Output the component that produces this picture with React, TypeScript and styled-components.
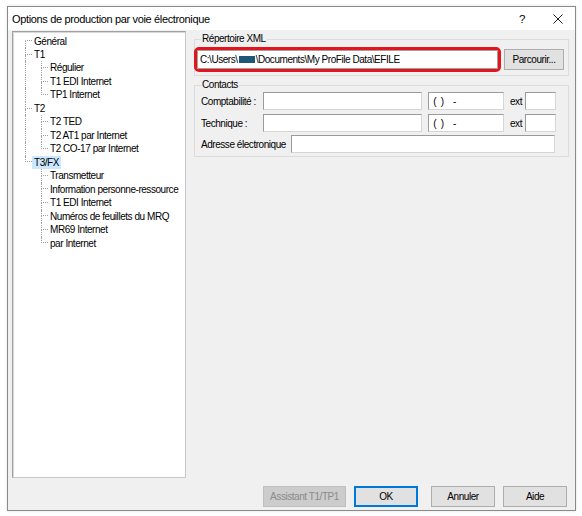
import React from 'react';
import styled, { createGlobalStyle } from 'styled-components';

const uiFont = `"Liberation Sans", Arial, sans-serif`;

const GlobalStyle = createGlobalStyle`
  html, body {
    margin: 0;
    padding: 0;
    background: #ffffff;
  }
  body {
    font-family: ${uiFont};
    font-size: 10px;
    letter-spacing: -0.45px;
    color: #000;
  }
`;

const Page = styled.div`
  width: 582px;
  height: 516px;
  padding: 6px 0 0 7px;
  box-sizing: border-box;
  overflow: hidden;
`;

const Window = styled.div`
  width: 569px;
  height: 505px;
  box-sizing: border-box;
  border: 1px solid #8a8a8a;
  background: #f0f0f0;
  display: flex;
  flex-direction: column;
  box-shadow: 0 0 3px rgba(0, 0, 0, 0.12);
`;

const TitleBar = styled.div`
  height: 24px;
  background: #ffffff;
  display: flex;
  align-items: center;
  padding-left: 4px;
`;

const Title = styled.div`
  flex: 1;
  font-size: 11px;
  letter-spacing: -0.35px;
`;

const HelpGlyph = styled.div`
  width: 14px;
  font-size: 11.5px;
  margin-right: 24px;
  text-align: center;
`;

const CloseButton = styled.div`
  width: 10px;
  height: 10px;
  margin-right: 12px;
  display: flex;
`;

const Body = styled.div`
  flex: 1;
  display: flex;
  flex-direction: column;
  padding: 1px 6px 3px 4px;
`;

const Main = styled.div`
  display: flex;
  gap: 8px;
`;

const TreeBox = styled.div`
  width: 174px;
  height: 447px;
  box-sizing: border-box;
  background: #ffffff;
  border: 1px solid #a0a0a0;
  border-right-color: #c8c8c8;
  border-bottom-color: #c8c8c8;
  box-shadow: inset 1px 1px 0 #d8d8d8;
  padding: 2.5px 0 0 8px;
`;

const TreeRow = styled.div`
  height: 13.47px;
  display: flex;
  align-items: stretch;
`;

const Indent = styled.span<{ $line: boolean }>`
  width: 16px;
  flex: none;
  box-sizing: border-box;
  padding-left: 4px;
  display: flex;
  &::before {
    content: '';
    display: block;
    border-left: ${(p) => (p.$line ? '1px dotted #a0a0a0' : 'none')};
  }
`;

const Connector = styled.span`
  width: 11px;
  flex: none;
  display: grid;
  grid-template-rows: 1fr 1fr;
`;

const HalfTop = styled.span<{ $line: boolean }>`
  margin-left: 4px;
  border-left: ${(p) => (p.$line ? '1px dotted #a0a0a0' : '1px solid transparent')};
  border-bottom: 1px dotted #a0a0a0;
`;

const HalfBottom = styled.span<{ $line: boolean }>`
  margin-left: 4px;
  border-left: ${(p) => (p.$line ? '1px dotted #a0a0a0' : '1px solid transparent')};
`;

const NodeLabel = styled.span<{ $selected?: boolean }>`
  padding: 0 2px;
  line-height: 13.47px;
  white-space: nowrap;
  background: ${(p) => (p.$selected ? '#cce8ff' : 'transparent')};
`;

const RightColumn = styled.div`
  flex: 1;
  padding-top: 2px;
  display: flex;
  flex-direction: column;
`;

const Group = styled.fieldset<{ $gapTop?: number }>`
  margin: ${(p) => p.$gapTop ?? 0}px 0 0 0;
  padding: 2px 4px 3px 1px;
  border: 1px solid #dcdcdc;
  min-width: 0;
`;

const Legend = styled.legend`
  margin-left: 5px;
  padding: 0 1px;
  line-height: 12px;
`;

const PathRow = styled.div`
  display: flex;
  align-items: center;
  gap: 3px;
`;

const Highlight = styled.div`
  margin-left: -2px;
  border: 3px solid #e2141c;
  border-radius: 5px;
  display: flex;
`;

const Field = styled.div<{ $w: number }>`
  width: ${(p) => p.$w}px;
  height: 18px;
  flex: none;
  box-sizing: border-box;
  background: #ffffff;
  border: 1px solid #9a9a9a;
  border-right-color: #d6d6d6;
  border-bottom-color: #d6d6d6;
  display: flex;
  align-items: center;
  padding-left: 2px;
  white-space: pre;
  overflow: hidden;
`;

const PathField = styled(Field)`
  height: 19px;
  border-color: #a0a0a0;
`;

const Redacted = styled.span`
  display: inline-block;
  width: 16px;
  height: 7px;
  background: #1d5676;
  margin: 0 1px 0 1px;
`;

const Button = styled.div<{ $w: number; $default?: boolean; $disabled?: boolean }>`
  width: ${(p) => p.$w}px;
  height: 21px;
  flex: none;
  box-sizing: border-box;
  display: flex;
  align-items: center;
  justify-content: center;
  background: ${(p) => (p.$disabled ? '#cccccc' : '#e1e1e1')};
  border: 1px solid ${(p) => (p.$default ? '#0078d7' : p.$disabled ? '#bfbfbf' : '#adadad')};
  box-shadow: ${(p) => (p.$default ? 'inset 0 0 0 1px #0078d7' : 'none')};
  color: ${(p) => (p.$disabled ? '#8a8a8a' : '#000')};
  white-space: nowrap;
`;

const ContactRows = styled.div`
  margin-top: -1px;
  padding-left: 5px;
  display: flex;
  flex-direction: column;
`;

const ContactRow = styled.div<{ $gap: number }>`
  display: flex;
  align-items: center;
  margin-top: ${(p) => p.$gap}px;
`;

const RowLabel = styled.span<{ $w: number }>`
  width: ${(p) => p.$w}px;
  flex: none;
  white-space: nowrap;
`;

const Ext = styled.span`
  margin: 0 0 0 6px;
  width: 15px;
  flex: none;
`;

const Footer = styled.div`
  margin-top: 8px;
  display: flex;
  justify-content: flex-end;
  padding-right: 2px;
`;

const Spacer = styled.div<{ $w: number }>`
  width: ${(p) => p.$w}px;
  flex: none;
`;

type Node = { label: string; selected?: boolean; children?: string[] };

const tree: Node[] = [
  { label: 'Général' },
  { label: 'T1', children: ['Régulier', 'T1 EDI Internet', 'TP1 Internet'] },
  { label: 'T2', children: ['T2 TED', 'T2 AT1 par Internet', 'T2 CO-17 par Internet'] },
  {
    label: 'T3/FX',
    selected: true,
    children: [
      'Transmetteur',
      'Information personne-ressource',
      'T1 EDI Internet',
      'Numéros de feuillets du MRQ',
      'MR69 Internet',
      'par Internet',
    ],
  },
];

function Tree() {
  const rows: React.ReactNode[] = [];
  tree.forEach((node, i) => {
    const firstRoot = i === 0;
    const lastRoot = i === tree.length - 1;
    rows.push(
      <TreeRow key={node.label + i}>
        <Connector>
          <HalfTop $line={!firstRoot} />
          <HalfBottom $line={!lastRoot} />
        </Connector>
        <NodeLabel $selected={node.selected}>{node.label}</NodeLabel>
      </TreeRow>
    );
    node.children?.forEach((child, j) => {
      const lastChild = j === (node.children?.length ?? 0) - 1;
      rows.push(
        <TreeRow key={`${node.label}-${child}-${j}`}>
          <Indent $line={!lastRoot} />
          <Connector>
            <HalfTop $line />
            <HalfBottom $line={!lastChild} />
          </Connector>
          <NodeLabel>{child}</NodeLabel>
        </TreeRow>
      );
    });
  });
  return <TreeBox>{rows}</TreeBox>;
}

function PhoneRow({ label, gap }: { label: string; gap: number }) {
  return (
    <ContactRow $gap={gap}>
      <RowLabel $w={62}>{label}</RowLabel>
      <Field $w={159} />
      <Spacer $w={6} />
      <Field $w={76}>{' (  )    -'}</Field>
      <Ext>ext</Ext>
      <Field $w={31} />
    </ContactRow>
  );
}

export default function App() {
  return (
    <>
      <GlobalStyle />
      <Page>
        <Window>
          <TitleBar>
            <Title>Options de production par voie électronique</Title>
            <HelpGlyph>?</HelpGlyph>
            <CloseButton>
              <svg width="10" height="10" viewBox="0 0 10 10">
                <path d="M0.5 0.5 L9.5 9.5 M9.5 0.5 L0.5 9.5" stroke="#222" strokeWidth="1" />
              </svg>
            </CloseButton>
          </TitleBar>
          <Body>
            <Main>
              <Tree />
              <RightColumn>
                <Group>
                  <Legend>Répertoire XML</Legend>
                  <PathRow>
                    <Highlight>
                      <PathField $w={301}>
                        C:\Users\<Redacted />\Documents\My ProFile Data\EFILE
                      </PathField>
                    </Highlight>
                    <Button $w={60}>Parcourir...</Button>
                  </PathRow>
                </Group>
                <Group $gapTop={3}>
                  <Legend>Contacts</Legend>
                  <ContactRows>
                    <PhoneRow label="Comptabilité :" gap={0} />
                    <PhoneRow label="Technique :" gap={4} />
                    <ContactRow $gap={3}>
                      <RowLabel $w={90}>Adresse électronique</RowLabel>
                      <Field $w={264} />
                    </ContactRow>
                  </ContactRows>
                </Group>
              </RightColumn>
            </Main>
            <Footer>
              <Button $w={83} $disabled>
                Assistant T1/TP1
              </Button>
              <Spacer $w={8} />
              <Button $w={64} $default>
                OK
              </Button>
              <Spacer $w={13} />
              <Button $w={64}>Annuler</Button>
              <Spacer $w={8} />
              <Button $w={64}>Aide</Button>
            </Footer>
          </Body>
        </Window>
      </Page>
    </>
  );
}
